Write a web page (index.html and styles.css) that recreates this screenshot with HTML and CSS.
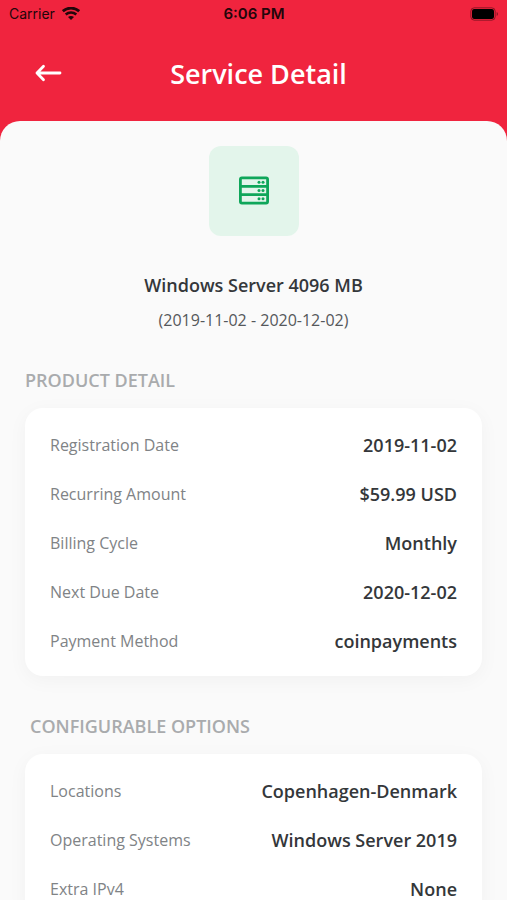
FILE: index.html
```html
<!DOCTYPE html>
<html lang="en">
<head>
<meta charset="utf-8">
<meta name="viewport" content="width=device-width, initial-scale=1">
<title>Service Detail</title>
<link rel="stylesheet" href="styles.css">
</head>
<body>
<div class="app">
  <div class="status">
    <div class="status-left">
      <span>Carrier</span>
      <svg class="wifi" viewBox="0 0 18 14" aria-hidden="true">
        <path d="M.800 4.200C5.400 0 12.600 0 17.200 4.200" fill="none" stroke="currentColor" stroke-width="2.700"/>
        <path d="M3.700 7.500C6.700 4.800 11.300 4.800 14.300 7.500" fill="none" stroke="currentColor" stroke-width="2.500"/>
        <path d="M9 13L6 10.100C7.700 8.600 10.300 8.600 12 10.100Z" fill="currentColor"/>
      </svg>
    </div>
    <time class="clock">6:06 PM</time>
    <div class="status-right">
      <svg class="battery" viewBox="0 0 29 14" aria-hidden="true">
        <rect x=".8" y=".8" width="24.400" height="12.400" rx="3.500" fill="none" stroke="#000" stroke-opacity=".4"/>
        <rect x="2" y="2" width="22" height="10" rx="2.200" fill="#000"/>
        <path d="M26.700 5V9C28.400 8.400 28.400 5.600 26.700 5Z" fill="#000" fill-opacity=".45"/>
      </svg>
    </div>
  </div>
  <header class="header">
    <button class="back" type="button" aria-label="Back">
      <svg viewBox="0 0 28 18" aria-hidden="true">
        <path d="M26 9H3M9.500 2.300L3 9L9.500 15.700" fill="none" stroke="currentColor" stroke-width="2.800" stroke-linecap="round" stroke-linejoin="round"/>
      </svg>
    </button>
    <h1 class="title">Service Detail</h1>
  </header>
  <main class="sheet">
    <div class="badge">
      <svg viewBox="0 0 32 30" aria-hidden="true">
        <g fill="none" stroke="#0fa65a" stroke-width="2.800">
          <rect x="2.400" y="1.900" width="27.200" height="25.200" rx="1.500"/>
          <path d="M2 10.300H30M2 18.700H30"/>
        </g>
        <g fill="#0fa65a">
          <circle cx="21" cy="6.200" r="1.500"/><circle cx="25" cy="6.200" r="1.500"/>
          <circle cx="21" cy="14.500" r="1.500"/><circle cx="25" cy="14.500" r="1.500"/>
          <circle cx="21" cy="22.800" r="1.500"/><circle cx="25" cy="22.800" r="1.500"/>
        </g>
      </svg>
    </div>
    <h2 class="product">Windows Server 4096 MB</h2>
    <p class="period">(2019-11-02 - 2020-12-02)</p>
    <section class="group">
      <h3 class="heading">PRODUCT DETAIL</h3>
      <dl class="card">
        <div class="row"><dt>Registration Date</dt><dd>2019-11-02</dd></div>
        <div class="row"><dt>Recurring Amount</dt><dd>$59.99 USD</dd></div>
        <div class="row"><dt>Billing Cycle</dt><dd>Monthly</dd></div>
        <div class="row"><dt>Next Due Date</dt><dd>2020-12-02</dd></div>
        <div class="row"><dt>Payment Method</dt><dd>coinpayments</dd></div>
      </dl>
    </section>
    <section class="group">
      <h3 class="heading heading-inset">CONFIGURABLE OPTIONS</h3>
      <dl class="card">
        <div class="row"><dt>Locations</dt><dd>Copenhagen-Denmark</dd></div>
        <div class="row"><dt>Operating Systems</dt><dd>Windows Server 2019</dd></div>
        <div class="row"><dt>Extra IPv4</dt><dd>None</dd></div>
      </dl>
    </section>
  </main>
</div>
</body>
</html>
```
FILE: styles.css
```css
* {
  box-sizing: border-box;
  margin: 0;
}

body {
  background: #f0243e;
  color: #34373a;
  font-family: "Open Sans", "Noto Sans", sans-serif;
}

.app {
  display: flex;
  flex-direction: column;
  height: 100vh;
}

.status {
  display: grid;
  grid-template-columns: 1fr auto 1fr;
  align-items: center;
  height: 27px;
  padding: 0 8px 0 9px;
  color: #23060a;
  font: 14px/20px Inter, sans-serif;
}

.status-left {
  display: flex;
  align-items: center;
  gap: 7px;
}

.wifi {
  width: 18px;
  height: 14px;
}

.clock {
  font-size: 15px;
  font-weight: 600;
}

.status-right {
  display: flex;
  justify-content: flex-end;
}

.battery {
  width: 29px;
  height: 14px;
}

.header {
  display: grid;
  grid-template-columns: 48px 1fr 38px;
  align-items: center;
  height: 94px;
  padding: 0 24px;
  color: #fff;
}

.back {
  display: flex;
  justify-content: center;
  padding: 11px 0 13px;
  border: 0;
  background: none;
  color: inherit;
  cursor: pointer;
}

.back svg {
  width: 28px;
  height: 18px;
}

.title {
  font-size: 27px;
  font-weight: 600;
  line-height: 36px;
  text-align: center;
}

.sheet {
  flex: 1;
  min-height: 0;
  overflow-y: auto;
  scrollbar-width: none;
  padding: 25px 25px 24px;
  border-radius: 20px 20px 0 0;
  background: #fafafa;
}

.badge {
  display: flex;
  align-items: center;
  justify-content: center;
  width: 90px;
  height: 90px;
  margin: 0 auto 36px;
  border-radius: 12px;
  background: #e3f5eb;
}

.badge svg {
  width: 32px;
  height: 30px;
}

.product {
  font-size: 18px;
  font-weight: 600;
  line-height: 26px;
  text-align: center;
}

.period {
  margin-top: 10px;
  color: #55585b;
  font-size: 16px;
  line-height: 24px;
  text-align: center;
}

.group {
  margin-top: 36px;
}

.group + .group {
  margin-top: 38px;
}

.heading {
  margin-bottom: 16px;
  color: #a9abad;
  font-size: 18px;
  font-weight: 600;
  line-height: 24px;
}

.heading-inset {
  padding-left: 5px;
}

.card {
  padding: 12px 25px 11px;
  border-radius: 18px;
  background: #fff;
  box-shadow: 0 4px 20px rgba(0, 0, 0, 0.04);
}

.row {
  display: flex;
  align-items: center;
  justify-content: space-between;
  gap: 16px;
  height: 49px;
}

.row dt {
  color: #808386;
  font-size: 16px;
}

.row dd {
  font-size: 18px;
  font-weight: 600;
}
```
